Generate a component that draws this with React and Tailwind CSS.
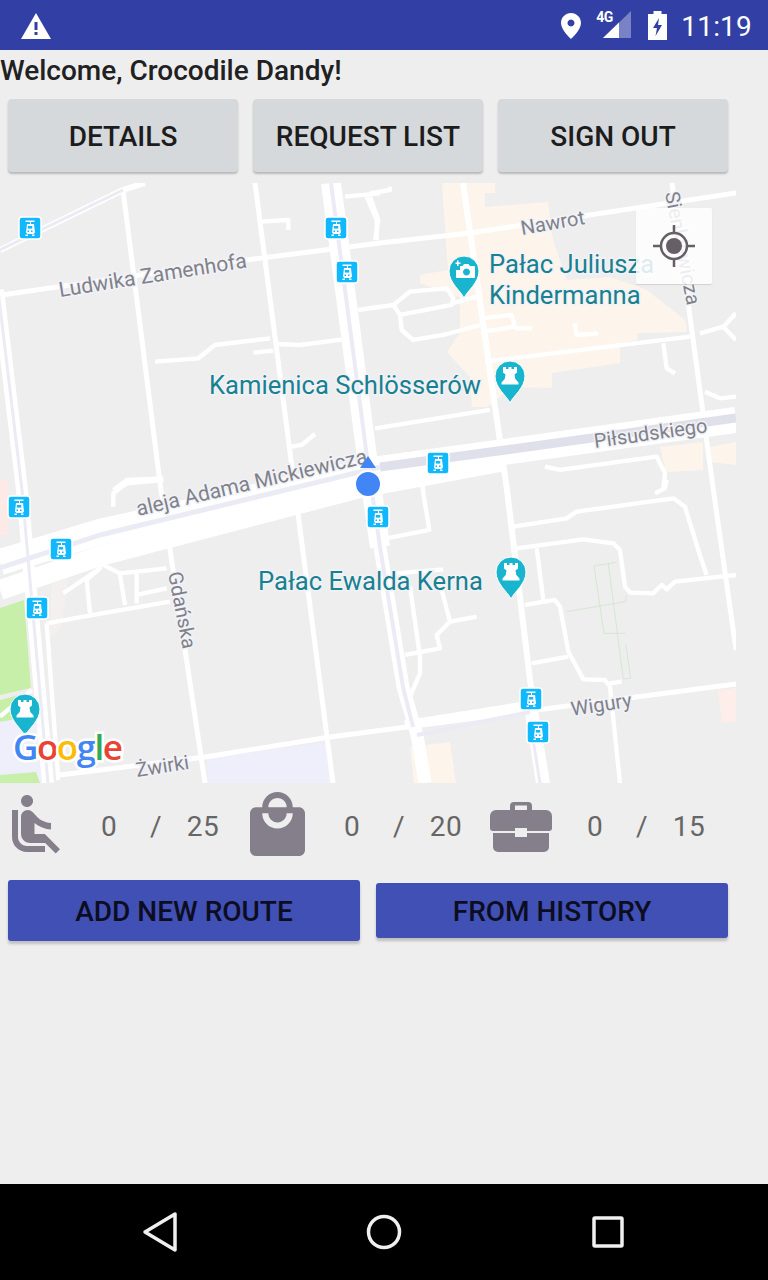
import React from "react";

const ICON_GRAY = "#857f8c";

// road lines, noted per map quadrant at 3x (see <Roads>)
const topLeft = [
  "1035,50 1140,40",
  "1100,50 1130,120 1130,180",
  "785,125 865,120 865,150",
  "465,545 595,535 645,495 810,475",
  "830,492 900,495 1030,478",
  "760,518 820,512",
  "1075,390 1140,380",
  "875,800 905,795 945,762",
  "340,930 380,900 490,895",
];
const topRight = [
  "0,40 60,30 60,20",
  "0,50 25,120 15,180",
  "0,385 70,375 120,335 230,325 250,355 245,375 90,405 70,375",
  "90,405 95,450 130,480 220,465 330,435",
  "245,370 320,350",
  "335,415 425,405 435,440 340,455",
  "435,445 485,445",
  "615,430 620,465 685,460",
  "345,545 960,470",
  "15,745 360,690",
  "880,490 890,565 915,580",
  "1005,635 1050,655 1098,650",
  "990,460 1060,440 1098,400",
  "1060,440 1098,480",
  "525,860 570,870 860,830 885,880 880,930",
  "155,900 160,930",
];
const bottomLeft = [
  "340,80 340,40 380,10 490,0",
  "140,430 280,405 510,365",
  "270,400 260,300 300,265 190,340",
  "300,250 360,280 500,265",
  "360,285 375,375",
  "410,280 410,370",
  "410,345 500,325",
  "140,430 175,900",
  "0,710 95,630",
];
const bottomRight = [
  "155,10 178,150 50,175",
  "430,140 590,115 620,95 910,55 945,80 985,210 1010,285",
  "440,205 640,178 730,190 750,210 765,320 780,338 850,340 875,315 890,328 915,305 1098,285",
  "500,205 520,360",
  "465,375 555,360 570,380 595,515 640,598 705,600 720,620 750,910",
  "485,550 595,530",
  "720,610 755,605",
  "120,320 150,530 150,580 120,650",
  "105,525 210,505 200,465 240,425 215,330",
  "240,425 320,410",
  "80,280 220,268",
  "855,40 885,25 890,0",
];
const greenPaths = [
  "590,395 765,365 770,345",
  "672,258 740,247",
  "672,258 702,460 765,460",
  "715,250 760,597 782,595 768,495",
];

const trams = [
  [30, 228], [336, 228], [347, 272], [438, 463], [19, 507],
  [61, 549], [37, 608], [378, 517], [531, 699], [538, 732],
];

const grayLabels = [
  { text: "Ludwika Zamenhofa", x: 60, y: 297, r: -9, size: "text-[21px]" },
  { text: "Nawrot", x: 522, y: 235, r: -10, size: "text-[20px]" },
  { text: "Piłsudskiego", x: 595, y: 448, r: -8, size: "text-[20px]" },
  { text: "aleja Adama Mickiewicza", x: 138, y: 516, r: -13, size: "text-[21px]" },
  { text: "Gdańska", x: 168, y: 573, r: 79, size: "text-[20px]" },
  { text: "Sienkiewicza", x: 665, y: 193, r: 79, size: "text-[20px]" },
  { text: "Żwirki", x: 137, y: 777, r: -9, size: "text-[20px]" },
  { text: "Wigury", x: 572, y: 716, r: -9, size: "text-[20px]" },
];

const tealLabels = [
  { text: "Pałac Juliusza", x: 489, y: 273 },
  { text: "Kindermanna", x: 489, y: 304 },
  { text: "Kamienica Schlösserów", x: 209, y: 394 },
  { text: "Pałac Ewalda Kerna", x: 258, y: 590 },
];

function Roads({ x, y, lines, width = 13, color = "#ffffff" }) {
  return (
    <g transform={`translate(${x} ${y}) scale(0.3333)`} fill="none" stroke={color} strokeWidth={width} strokeLinejoin="round">
      {lines.map((l, i) => (
        <polyline key={i} points={l} />
      ))}
    </g>
  );
}

function Tram({ x, y }) {
  return (
    <g transform={`translate(${x - 11} ${y - 11})`}>
      <rect x="0" y="0" width="22" height="22" rx="3" fill="#12b8fd" stroke="#ffffff" strokeWidth="1.5" />
      <path d="M6.5 3.5h9v1.5h-3.5v2h3l1 8.5-1.5 1.5h-6L7 15.5 8 7h3V5H6.5z" fill="#ffffff" />
      <rect x="8.8" y="9" width="4.4" height="2.6" fill="#12b8fd" />
      <rect x="8.5" y="13.5" width="1.5" height="1.5" fill="#12b8fd" />
      <rect x="12" y="13.5" width="1.5" height="1.5" fill="#12b8fd" />
      <path d="M6.5 17.5h2.5v1.5H6.5zM13 17.5h2.5v1.5H13z" fill="#ffffff" />
    </g>
  );
}

function Pin({ x, y, camera }) {
  return (
    <g transform={`translate(${x} ${y})`}>
      <path d="M0 27 C-3 20 -15 12 -15 0 A15 15 0 0 1 15 0 C15 12 3 20 0 27Z" fill="#19b5cf" stroke="#ffffff" strokeWidth="1" />
      {camera ? (
        <path
          fillRule="evenodd"
          d="M-4 -5h2.500l1.500-2h4.500l1.500 2h4a1 1 0 0 1 1 1V6a1 1 0 0 1-1 1H-7a1 1 0 0 1-1-1V-1h4zM2.500 -2.500a3.500 3.500 0 1 0 .01 0zM-8.500 -8.500h1.500v-2h1.500v2h2v1.500h-2v2h-1.500v-2h-1.500z"
          fill="#ffffff"
        />
      ) : (
        <path d="M-7 -9h3v2h2.500v-2h3v2H4v-2h3v5.500l-2.500 2 .8 4.500 3.200 3.500v2h-17v-2l3.200-3.500.8-4.500-2.500-2z" fill="#ffffff" />
      )}
    </g>
  );
}

function MapView() {
  return (
    <div className="relative h-[600px] w-[736px] overflow-hidden">
      <svg width="736" height="600" viewBox="0 183 736 600" className="block font-['Roboto']">
        <rect x="0" y="183" width="736" height="600" fill="#eeeeee" />

        {/* buildings and land */}
        <polygon
          fill="#fdf5ec"
          points="442,183 495,183 495,193 485,193 485,207 548,202 553,240 567,280 610,277 647,290 685,320 687,332 637,333 637,340 620,343 620,363 552,373 552,388 513,387 487,407 472,407 470,377 447,352 460,333 460,297 420,283 420,275 448,270"
        />
        <polygon fill="#fdf5ec" points="660,447 703,442 703,470 666,472" />
        <polygon fill="#fdf5ec" points="710,447 736,442 736,465 712,462" />
        <polygon fill="#fdf5ec" points="410,747 450,742 456,783 414,783" />
        <polygon fill="#fdeeea" points="718,690 736,688 736,722 722,722" />
        <polygon fill="#fde9e6" points="0,480 8,480 8,535 0,535" />
        <polygon fill="#f5f0f0" points="52,580 68,578 62,625 50,640" />
        <polygon fill="#c8efa9" points="0,608 24,600 31,688 0,695" />
        <polygon fill="#c8efa9" points="0,700 30,692 34,716 0,722" />
        <polygon fill="#efeffb" points="0,722 38,716 46,783 0,783" />
        <polygon fill="#c8efa9" points="0,775 36,772 40,783 0,783" />
        <polygon fill="#efeffb" points="207,758 330,742 336,783 207,783" />

        {/* main streets */}
        <g fill="none" stroke="#ffffff" strokeLinejoin="round">
          <polyline strokeWidth="5" points="-5,296 230,262 380,243 470,233 736,193" />
          <polyline strokeWidth="5" points="60,775 205,757 330,737 736,684" />
          <polyline strokeWidth="5" points="123,190 160,483 205,783" />
          <polyline strokeWidth="5" points="255,183 333,783" />
          <polyline strokeWidth="6" points="463,183 507,490 530,680 547,783" />
          <polyline strokeWidth="5" points="672,183 712,480 736,650" />
          <polyline strokeWidth="6" points="0,250 123,190 145,183" />
          <polyline strokeWidth="12" points="-2,290 22,490 48,783" />
          <polyline strokeWidth="20" points="331,183 367,457 380,547" />
          <polyline strokeWidth="13" points="380,547 403,687 417,735 425,783" />
          <polyline strokeWidth="9" points="405,725 530,705" />
          <polyline strokeWidth="8" points="527,700 540,783" />
          <polyline strokeWidth="26" points="0,562 100,532 380,469 736,420" />
          <polyline strokeWidth="20" points="0,590 100,556 360,488 500,462" />
        </g>
        <g fill="none" stroke="#ebebf5" strokeLinejoin="round">
          <polyline strokeWidth="3" points="0,250 123,190" />
          <polyline strokeWidth="3" points="-2,290 22,490 48,783" />
          <polyline strokeWidth="4" points="331,183 367,457 380,547 403,687 413,727" />
          <polyline strokeWidth="4" points="417,735 530,712" />
          <polyline strokeWidth="3" points="530,720 540,783" />
          <polyline strokeWidth="5" points="0,568 100,535 380,467" />
        </g>
        <polyline fill="none" stroke="#e0e0ea" strokeWidth="9" strokeLinejoin="round" points="380,467 520,448 736,418" />

        <Roads x={0} y={180} lines={topLeft} />
        <Roads x={370} y={180} lines={topRight} />
        <Roads x={0} y={480} lines={bottomLeft} />
        <Roads x={370} y={480} lines={bottomRight} />
        <Roads x={370} y={480} lines={greenPaths} width={2.5} color="#cfe6cb" />

        {/* street names */}
        {grayLabels.map((l) => (
          <text
            key={l.text}
            x={l.x}
            y={l.y}
            transform={`rotate(${l.r} ${l.x} ${l.y})`}
            className={`${l.size} [paint-order:stroke]`}
            fill="#7f8289"
            stroke="#f2f2f8"
            strokeWidth="3"
          >
            {l.text}
          </text>
        ))}
        {tealLabels.map((l) => (
          <text
            key={l.text}
            x={l.x}
            y={l.y}
            className="text-[25.6px] [paint-order:stroke]"
            fill="#18818f"
            stroke="#f2f2f8"
            strokeWidth="3"
          >
            {l.text}
          </text>
        ))}

        {trams.map(([x, y]) => (
          <Tram key={`${x}-${y}`} x={x} y={y} />
        ))}

        <Pin x={464} y={271} camera />
        <Pin x={510} y={376} />
        <Pin x={511} y={572} />
        <Pin x={25} y={709} />

        {/* my location */}
        <path d="M368 456 L376 468 H360 Z" fill="#4285f4" />
        <circle cx="368" cy="484" r="13" fill="#4285f4" stroke="#ffffff" strokeWidth="2" />

        {/* Google logo */}
        <text
          x="13"
          y="760"
          className="font-['Open_Sans'] text-[35px] font-semibold tracking-[-1.5px] [paint-order:stroke]"
          stroke="#ffffff"
          strokeWidth="5"
        >
          <tspan fill="#4285f4">G</tspan>
          <tspan fill="#ea4335">o</tspan>
          <tspan fill="#fbbc05">o</tspan>
          <tspan fill="#4285f4">g</tspan>
          <tspan fill="#34a853">l</tspan>
          <tspan fill="#ea4335">e</tspan>
        </text>
      </svg>

      {/* my-location button */}
      <div className="absolute top-[25px] left-[636px] flex h-[76px] w-[76px] items-center justify-center rounded-[2px] bg-white/85 shadow-[0_1px_1px_rgba(0,0,0,0.12)]">
        <svg width="44" height="44" viewBox="0 0 44 44">
          <circle cx="22" cy="22" r="13" fill="none" stroke="#666066" strokeWidth="2.5" />
          <circle cx="22" cy="22" r="8" fill="#666066" />
          <path d="M22 1v8M22 35v8M1 22h8M35 22h8" stroke="#666066" strokeWidth="2.500" />
        </svg>
      </div>
    </div>
  );
}

function StatusBar() {
  return (
    <div className="flex h-[50px] items-center bg-[#3240a5] pl-[21px] pr-[16px] font-['Roboto'] text-white">
      <svg width="30" height="26" viewBox="0 0 30 26" className="mt-[1px]">
        <path
          fillRule="evenodd"
          fill="#ffffff"
          d="M15 0 L30 26 H0 Z M13.500 9 V17 H16.500 V9 Z M13.500 19 V22 H16.500 V19 Z"
        />
      </svg>
      <div className="ml-auto flex items-center">
        <svg width="20" height="26" viewBox="0 0 20 26" className="mt-[1px]">
          <path
            fillRule="evenodd"
            fill="#ffffff"
            d="M10 0C4.500 0 0 4.400 0 10c0 7 10 16 10 16s10-9 10-16C20 4.400 15.500 0 10 0zM10 6.500a3.500 3.500 0 1 1-.01 0z"
          />
        </svg>
        <div className="relative ml-[15px] h-[28px] w-[35px]">
          <span className="absolute top-[-1px] left-0 text-[14px] leading-[14px] font-bold tracking-[-0.5px]">4G</span>
          <svg width="35" height="28" viewBox="0 0 35 28" className="block">
            <path d="M7 27 L35 0 V27 Z" fill="#ffffff" fillOpacity="0.35" />
            <path d="M7 27 L23 11.500 V27 Z" fill="#ffffff" />
          </svg>
        </div>
        <svg width="19" height="29" viewBox="0 0 19 29" className="ml-[17px]">
          <path
            fillRule="evenodd"
            fill="#ffffff"
            d="M5.500 0h8v3H19v26H0V3h5.500zM11 7 L5 17h4l-1.500 8L14 14h-4z"
          />
        </svg>
        <span className="mt-[3px] ml-[14px] text-[28px] leading-none tracking-[0.2px]">11:19</span>
      </div>
    </div>
  );
}

function Stat({ icon, used, total }) {
  return (
    <div className="flex w-[243px] items-center">
      <div className="flex w-[70px] justify-center">{icon}</div>
      <div className="ml-[15px] flex text-center text-[28px] tracking-[0.5px] text-[#666666]">
        <span className="w-[48px]">{used}</span>
        <span className="w-[46px]">/</span>
        <span className="w-[48px]">{total}</span>
      </div>
    </div>
  );
}

export default function App() {
  return (
    <div className="flex h-[1280px] flex-col bg-[#eeeeee] font-['Roboto']">
      <StatusBar />

      <div className="h-[44px] text-[28px] leading-[42px] font-medium text-[#212121]">Welcome, Crocodile Dandy!</div>

      <div className="mt-[5px] ml-[8px] flex gap-[15px]">
        {["DETAILS", "REQUEST LIST", "SIGN OUT"].map((label) => (
          <button
            key={label}
            className="h-[73px] w-[230px] rounded-[4px] bg-[#d6d9dc] pt-[3px] text-[28px] font-medium text-[#1c1c1c] shadow-[0_2px_2px_rgba(0,0,0,0.22)]"
          >
            {label}
          </button>
        ))}
      </div>

      <div className="mt-[11px]">
        <MapView />
      </div>

      <div className="flex h-[87px] items-center">
        <Stat
          used="0"
          total="25"
          icon={
            <svg width="48" height="60" viewBox="4 2 16 20" fill={ICON_GRAY} preserveAspectRatio="none" className="translate-x-[1px] -translate-y-[2px]">
              <path d="M7.590 5.410c-.780-.780-.780-2.050 0-2.830.780-.780 2.050-.780 2.830 0 .780.780.780 2.050 0 2.830-.790.790-2.050.790-2.830 0zM6 16V7H4v9c0 2.760 2.240 5 5 5h6v-2H9c-1.660 0-3-1.340-3-3zm14 4.070L14.930 15H11.500v-3.680c1.400 1.150 3.600 2.160 5.500 2.160v-2.160c-1.660.020-3.610-.870-4.670-2.040l-1.400-1.550c-.190-.210-.430-.380-.690-.500-.290-.140-.620-.230-.960-.230h-.030C8.010 7 7 8.010 7 9.250V15c0 1.660 1.340 3 3 3h5.070l3.500 3.500L20 20.070z" />
            </svg>
          }
        />
        <Stat
          used="0"
          total="20"
          icon={
            <svg width="55" height="64" viewBox="3 1 18 21" fill={ICON_GRAY} preserveAspectRatio="none" className="-translate-x-[1px] -translate-y-[3px]">
              <path d="M19 6h-2c0-2.760-2.240-5-5-5S7 3.240 7 6H5c-1.100 0-1.990.900-1.990 2L3 20c0 1.100.900 2 2 2h14c1.100 0 2-.900 2-2V8c0-1.100-.900-2-2-2zm-7-3c1.660 0 3 1.340 3 3H9c0-1.660 1.340-3 3-3zm0 10c-2.760 0-5-2.240-5-5h2c0 1.660 1.340 3 3 3s3-1.340 3-3h2c0 2.760-2.240 5-5 5z" />
            </svg>
          }
        />
        <Stat
          used="0"
          total="15"
          icon={
            <svg width="62" height="50" viewBox="0 0 62 50" fill={ICON_GRAY}>
              <path
                fillRule="evenodd"
                d="M20 8V4a4 4 0 0 1 4-4h14a4 4 0 0 1 4 4v4h14a6 6 0 0 1 6 6v12a3 3 0 0 1-3 3H37v-3H25v3H3a3 3 0 0 1-3-3V14a6 6 0 0 1 6-6zM25 3.500V8h12V3.500z"
              />
              <path d="M3 31h22v4h12v-4h22v14a5 5 0 0 1-5 5H8a5 5 0 0 1-5-5z" />
            </svg>
          }
        />
      </div>

      <div className="mt-[10px] ml-[8px] flex items-center gap-[16px]">
        <button className="h-[61px] w-[352px] rounded-[3px] bg-[#4050b5] pt-[2px] text-[28px] font-medium text-[#0d0d22] shadow-[0_3px_3px_rgba(0,0,0,0.2)]">
          ADD NEW ROUTE
        </button>
        <button className="h-[55px] w-[352px] rounded-[3px] bg-[#4050b5] pt-[2px] text-[28px] font-medium text-[#0d0d22] shadow-[0_3px_3px_rgba(0,0,0,0.2)]">
          FROM HISTORY
        </button>
      </div>

      <div className="mt-auto flex h-[96px] items-center justify-center gap-[176px] bg-black">
        <svg width="48" height="48" viewBox="0 0 48 48" fill="none" stroke="#f0f0f0" strokeWidth="3.500" strokeLinejoin="round">
          <path d="M9 24 L39 6 V42 Z" />
        </svg>
        <svg width="48" height="48" viewBox="0 0 48 48" fill="none" stroke="#f0f0f0" strokeWidth="3.500">
          <circle cx="24" cy="24" r="15.500" />
        </svg>
        <svg width="48" height="48" viewBox="0 0 48 48" fill="none" stroke="#f0f0f0" strokeWidth="3.500" strokeLinejoin="round">
          <rect x="10" y="10" width="28" height="28" rx="1" />
        </svg>
      </div>
    </div>
  );
}
